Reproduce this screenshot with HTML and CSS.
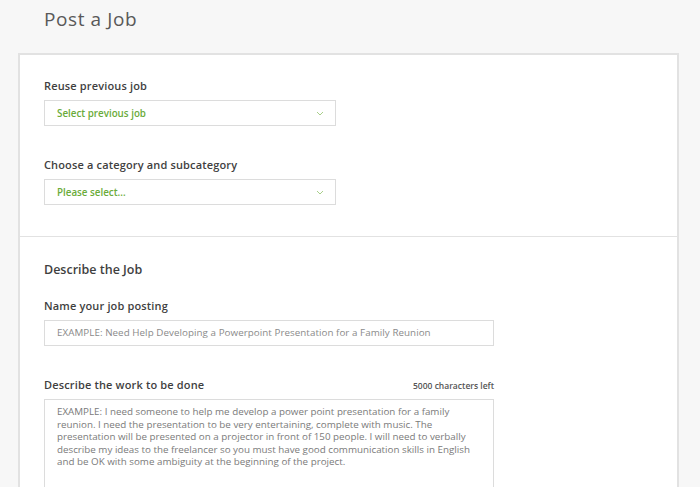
FILE: index.html
```html
<!DOCTYPE html>
<html>
<head>
<meta charset="utf-8">
<link rel="stylesheet" href="styles.css">
</head>
<body>
<h1 class="page-title">Post a Job</h1>
<div class="card">
  <section class="section section-top">
    <div class="label">Reuse previous job</div>
    <div class="select">
      <span>Select previous job</span>
      <svg class="chev" width="8" height="5" viewBox="0 0 8 5"><path d="M1 1 L4 4 L7 1" fill="none" stroke="#a9cf8a" stroke-width="1"/></svg>
    </div>
    <div class="label label-gap">Choose a category and subcategory</div>
    <div class="select">
      <span>Please select...</span>
      <svg class="chev" width="8" height="5" viewBox="0 0 8 5"><path d="M1 1 L4 4 L7 1" fill="none" stroke="#a9cf8a" stroke-width="1"/></svg>
    </div>
  </section>
  <section class="section section-job">
    <h2 class="section-title">Describe the Job</h2>
    <div class="label label-gap-sm">Name your job posting</div>
    <div class="input">EXAMPLE: Need Help Developing a Powerpoint Presentation for a Family Reunion</div>
    <div class="label-row">
      <div class="label">Describe the work to be done</div>
      <div class="count">5000 characters left</div>
    </div>
    <div class="textarea">EXAMPLE: I need someone to help me develop a power point presentation for a family reunion. I need the presentation to be very entertaining, complete with music. The presentation will be presented on a projector in front of 150 people. I will need to verbally describe my ideas to the freelancer so you must have good communication skills in English and be OK with some ambiguity at the beginning of the project.</div>
  </section>
</div>
</body>
</html>
```

FILE: styles.css
```css
* { box-sizing: border-box; }
html, body { margin: 0; padding: 0; }
body {
  background: #f7f7f7;
  font-family: "Open Sans", "Noto Sans", sans-serif;
  color: #4a4a4a;
  width: 700px;
  height: 487px;
  overflow: hidden;
}
.page-title {
  margin: 0;
  padding: 8px 0 0 44px;
  height: 52px;
  font-size: 19px;
  line-height: 22px;
  font-weight: 400;
  letter-spacing: 0.6px;
  color: #595959;
}
.card {
  margin-left: 18px;
  width: 661px;
  margin-top: 1px;
  background: #fff;
  border: 2px solid #e2e2e2;
  border-bottom: none;
}
.section {
  padding: 23px 0 31px 24px;
}
.section-job {
  padding-top: 24px;
}
.section-top {
  border-bottom: 1px solid #e2e2e2;
}
.label {
  font-size: 11px;
  line-height: 16px;
  font-weight: 600;
  letter-spacing: 0.15px;
  color: #3f3f3f;
  margin-bottom: 6px;
}
.label-gap { margin-top: 31px; }
.label-gap-sm { margin-top: 19px; }
.select {
  width: 292px;
  height: 26px;
  border: 1px solid #dcdcdc;
  display: flex;
  align-items: center;
  justify-content: space-between;
  padding: 0 11px 0 12px;
  font-size: 9.8px;
  font-weight: 600;
  color: #6aab3a;
}
.chev { display: block; }
.section-title {
  margin: 0;
  font-size: 12.5px;
  line-height: 18px;
  font-weight: 600;
  color: #3f3f3f;
}
.input {
  width: 450px;
  height: 26px;
  border: 1px solid #dcdcdc;
  padding: 0 12px;
  font-size: 9.8px;
  letter-spacing: 0.05px;
  line-height: 24px;
  color: #8a8a8a;
  white-space: nowrap;
  overflow: hidden;
}
.label-row {
  width: 450px;
  margin-top: 31px;
  display: flex;
  justify-content: space-between;
  align-items: baseline;
}
.count {
  font-size: 8.5px;
  font-weight: 600;
  color: #555;
}
.textarea {
  width: 450px;
  height: 120px;
  border: 1px solid #dcdcdc;
  padding: 6px 12px;
  font-size: 9.8px;
  line-height: 12.5px;
  color: #7a7a7a;
}
```
